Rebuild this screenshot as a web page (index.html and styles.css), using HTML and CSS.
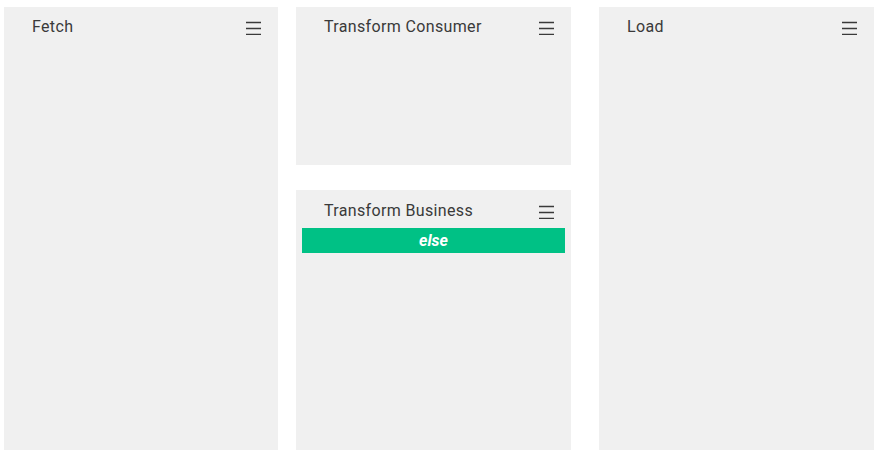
FILE: index.html
```html
<!DOCTYPE html>
<html>
<head>
<meta charset="utf-8">
<link rel="stylesheet" href="styles.css">
</head>
<body>
<div class="board">
  <div class="col col-first">
    <div class="panel panel-full">
      <div class="head">
        <span class="title">Fetch</span>
        <svg class="menu" width="15" height="14" viewBox="0 0 15 14"><path d="M0 1.5H15M0 7.5H15M0 13.5H15" stroke="#3a3a3a" stroke-width="1.4"/></svg>
      </div>
    </div>
  </div>
  <div class="col col-mid">
    <div class="panel panel-top">
      <div class="head">
        <span class="title">Transform Consumer</span>
        <svg class="menu" width="15" height="14" viewBox="0 0 15 14"><path d="M0 1.5H15M0 7.5H15M0 13.5H15" stroke="#3a3a3a" stroke-width="1.4"/></svg>
      </div>
    </div>
    <div class="panel panel-bottom">
      <div class="head">
        <span class="title">Transform Business</span>
        <svg class="menu" width="15" height="14" viewBox="0 0 15 14"><path d="M0 1.5H15M0 7.5H15M0 13.5H15" stroke="#3a3a3a" stroke-width="1.4"/></svg>
      </div>
      <div class="rule">else</div>
    </div>
  </div>
  <div class="col col-last">
    <div class="panel panel-full">
      <div class="head">
        <span class="title">Load</span>
        <svg class="menu" width="15" height="14" viewBox="0 0 15 14"><path d="M0 1.5H15M0 7.5H15M0 13.5H15" stroke="#3a3a3a" stroke-width="1.4"/></svg>
      </div>
    </div>
  </div>
</div>
</body>
</html>
```
FILE: styles.css
```css
html, body {
  margin: 0;
  padding: 0;
  background: #ffffff;
  font-family: Roboto, "Liberation Sans", sans-serif;
}
.board {
  display: flex;
  padding: 7px 0 0 4px;
  height: 443px;
}
.col {
  display: flex;
  flex-direction: column;
  width: 275px;
}
.col-first { width: 274px; }
.col-mid { margin-left: 18px; }
.col-last { margin-left: 28px; }
.panel {
  background: #f0f0f0;
  box-sizing: border-box;
}
.panel-full { height: 443px; }
.panel-top { height: 158px; }
.panel-bottom { height: 260px; margin-top: 25px; }
.head {
  display: flex;
  align-items: flex-start;
  justify-content: space-between;
  padding: 9px 17px 0 28px;
  height: 20px;
}
.panel-bottom .head { padding-top: 10px; }
.title {
  font-size: 16px;
  letter-spacing: 0.35px;
  line-height: 21px;
  color: #3a3a3a;
}
.menu {
  display: block;
  margin-top: 5px;
}
.rule {
  margin: 8px 6px 0 6px;
  height: 25px;
  background: #00c185;
  color: #ffffff;
  font-style: italic;
  font-weight: bold;
  font-size: 16px;
  line-height: 25px;
  text-align: center;
}
```
